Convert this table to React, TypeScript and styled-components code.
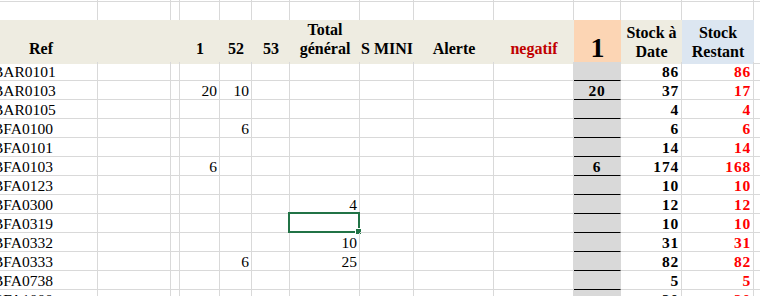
import styled, { createGlobalStyle } from 'styled-components'

const GRID = '#d9d9d9'
const COLUMNS = '114px 73px 9px 40px 32px 38px 70px 54px 80px 80px 47px 61px 72px 80px'

const GlobalStyle = createGlobalStyle`
  html, body {
    margin: 0;
    padding: 0;
    background: #ffffff;
    overflow: hidden;
  }
`

type Fill = 'tan' | 'peach' | 'blue' | 'grey' | 'none'

const fills: Record<Fill, string> = {
  tan: '#eeece1',
  peach: '#fcd5b4',
  blue: '#dce6f1',
  grey: '#d9d9d9',
  none: '#ffffff',
}

const Sheet = styled.div`
  margin-left: -16px;
  width: 850px;
  font-family: 'Liberation Serif', 'DejaVu Serif', serif;
  color: #000000;
`

const Row = styled.div<{ $height: number }>`
  display: grid;
  grid-template-columns: ${COLUMNS};
  height: ${({ $height }) => $height}px;
`

const BlankCell = styled.div<{ $bottom?: boolean }>`
  box-sizing: border-box;
  border-right: 1px solid ${GRID};
  border-bottom: ${({ $bottom }) => ($bottom ? `1px solid ${GRID}` : 'none')};
`

const HeadCell = styled.div<{ $fill: Fill; $middle?: boolean; $color?: string; $edge?: boolean }>`
  box-sizing: border-box;
  display: flex;
  flex-direction: column;
  align-items: center;
  justify-content: ${({ $middle }) => ($middle ? 'center' : 'flex-end')};
  padding-bottom: ${({ $middle }) => ($middle ? '0' : '6px')};
  background: ${({ $fill }) => fills[$fill]};
  border-bottom: ${({ $edge }) => ($edge ? '1px solid #000000' : 'none')};
  font-size: 16px;
  font-weight: 700;
  line-height: 19px;
  text-align: center;
  white-space: nowrap;
  color: ${({ $color }) => $color || '#000000'};
`

const BigNumber = styled(HeadCell)`
  font-size: 28px;
  line-height: 26px;
  padding-bottom: 2px;
`

const EmptyHead = styled.div`
  box-sizing: border-box;
  border-right: 1px solid ${GRID};
  border-bottom: 1px solid ${GRID};
`

const Cell = styled.div<{
  $align?: 'left' | 'right' | 'center'
  $bold?: boolean
  $color?: string
  $grey?: boolean
}>`
  position: relative;
  box-sizing: border-box;
  height: 19px;
  padding: 0 2px;
  font-size: 15.5px;
  line-height: 19px;
  white-space: nowrap;
  text-align: ${({ $align }) => $align || 'right'};
  font-weight: ${({ $bold }) => ($bold ? 700 : 400)};
  letter-spacing: ${({ $bold }) => ($bold ? '0.8px' : '0')};
  color: ${({ $color }) => $color || '#000000'};
  background: ${({ $grey }) => ($grey ? fills.grey : 'transparent')};
  border-right: 1px solid ${({ $grey }) => ($grey ? fills.grey : GRID)};
  border-bottom: 1px solid ${({ $grey }) => ($grey ? '#000000' : GRID)};
`

const RefCell = styled(Cell)`
  padding-left: 9px;
`

const Selection = styled.div`
  position: absolute;
  top: -2px;
  left: -2px;
  right: -1px;
  bottom: -1px;
  border: 2px solid #217346;
  pointer-events: none;
`

const Handle = styled.div`
  position: absolute;
  right: -4px;
  bottom: -4px;
  width: 5px;
  height: 5px;
  background: #217346;
  border: 1px solid #ffffff;
`

type Line = {
  ref: string
  d?: string
  e?: string
  g?: string
  k?: string
  date: string
  rest: string
  selected?: boolean
}

const lines: Line[] = [
  { ref: 'BAR0101', date: '86', rest: '86' },
  { ref: 'BAR0103', d: '20', e: '10', k: '20', date: '37', rest: '17' },
  { ref: 'BAR0105', date: '4', rest: '4' },
  { ref: 'BFA0100', e: '6', date: '6', rest: '6' },
  { ref: 'BFA0101', date: '14', rest: '14' },
  { ref: 'BFA0103', d: '6', k: '6', date: '174', rest: '168' },
  { ref: 'BFA0123', date: '10', rest: '10' },
  { ref: 'BFA0300', g: '4', date: '12', rest: '12' },
  { ref: 'BFA0319', date: '10', rest: '10', selected: true },
  { ref: 'BFA0332', g: '10', date: '31', rest: '31' },
  { ref: 'BFA0333', e: '6', g: '25', date: '82', rest: '82' },
  { ref: 'BFA0738', date: '5', rest: '5' },
  { ref: 'BFA1000', date: '20', rest: '20' },
]

const blanks = (count: number, bottom?: boolean) =>
  Array.from({ length: count }, (_, i) => <BlankCell key={i} $bottom={bottom} />)

const DataRow = ({ line }: { line: Line }) => (
  <Row $height={19}>
    <RefCell $align='left'>{line.ref}</RefCell>
    <Cell />
    <Cell />
    <Cell>{line.d}</Cell>
    <Cell>{line.e}</Cell>
    <Cell />
    <Cell>
      {line.g}
      {line.selected && (
        <Selection>
          <Handle />
        </Selection>
      )}
    </Cell>
    <Cell />
    <Cell />
    <Cell />
    <Cell $grey $bold $align='center'>
      {line.k}
    </Cell>
    <Cell $bold>{line.date}</Cell>
    <Cell $bold $color='#ff0000'>
      {line.rest}
    </Cell>
    <Cell />
  </Row>
)

export default function App() {
  return (
    <>
      <GlobalStyle />
      <Sheet>
        <Row $height={2}>{blanks(14, true)}</Row>
        <Row $height={18}>{blanks(14)}</Row>
        <Row $height={42}>
          <HeadCell $fill='tan'>Ref</HeadCell>
          <HeadCell $fill='tan' />
          <HeadCell $fill='tan' />
          <HeadCell $fill='tan'>1</HeadCell>
          <HeadCell $fill='tan'>52</HeadCell>
          <HeadCell $fill='tan'>53</HeadCell>
          <HeadCell $fill='tan'>
            <span>Total</span>
            <span>général</span>
          </HeadCell>
          <HeadCell $fill='tan'>S MINI</HeadCell>
          <HeadCell $fill='tan'>Alerte</HeadCell>
          <HeadCell $fill='tan' $color='#c00000'>
            negatif
          </HeadCell>
          <BigNumber $fill='peach' $edge>
            1
          </BigNumber>
          <HeadCell $fill='tan' $middle>
            <span>Stock à</span>
            <span>Date</span>
          </HeadCell>
          <HeadCell $fill='blue' $middle>
            <span>Stock</span>
            <span>Restant</span>
          </HeadCell>
          <EmptyHead />
        </Row>
        {lines.map((line) => (
          <DataRow key={line.ref} line={line} />
        ))}
      </Sheet>
    </>
  )
}
